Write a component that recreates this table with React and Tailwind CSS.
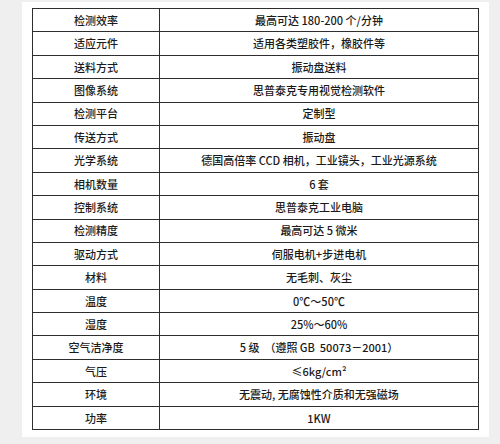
import React from "react";

const rows = [
  ["检测效率", "最高可达 180-200 个/分钟"],
  ["适应元件", "适用各类塑胶件，橡胶件等"],
  ["送料方式", "振动盘送料"],
  ["图像系统", "思普泰克专用视觉检测软件"],
  ["检测平台", "定制型"],
  ["传送方式", "振动盘"],
  ["光学系统", "德国高倍率 CCD 相机，工业镜头，工业光源系统"],
  ["相机数量", "6 套"],
  ["控制系统", "思普泰克工业电脑"],
  ["检测精度", "最高可达 5 微米"],
  ["驱动方式", "伺服电机+步进电机"],
  ["材料", "无毛刺、灰尘"],
  ["温度", "0℃～50℃"],
  ["湿度", "25%～60%"],
  ["空气洁净度", "5 级  （遵照 GB  50073－2001）"],
  ["气压", "≤6kg/cm²"],
  ["环境", "无震动, 无腐蚀性介质和无强磁场"],
  ["功率", "1KW"],
];

export default function App() {
  return (
    <div
      className="w-[500px] h-[444px] bg-[#efefef] pl-[22px] pt-[2px] pr-[11px] pb-[7px]"
      style={{ fontFamily: '"Noto Sans CJK SC", "Liberation Sans", sans-serif' }}
    >
      <div className="w-full h-full bg-white pl-[10px] pt-[6px] pr-[10px] pb-[7px]">
        <div className="grid grid-cols-[127px_1fr] grid-rows-[repeat(18,1fr)] h-[422px] border-t border-l border-[#2e2e2e] text-[11px] font-medium text-[#1a1a1a]">
          {rows.map(([k, v]) => (
            <React.Fragment key={k}>
              <div className="flex items-center justify-center border-r border-b border-[#2e2e2e] whitespace-pre">
                {k}
              </div>
              <div className="flex items-center justify-center border-r border-b border-[#2e2e2e] whitespace-pre">
                {v}
              </div>
            </React.Fragment>
          ))}
        </div>
      </div>
    </div>
  );
}
